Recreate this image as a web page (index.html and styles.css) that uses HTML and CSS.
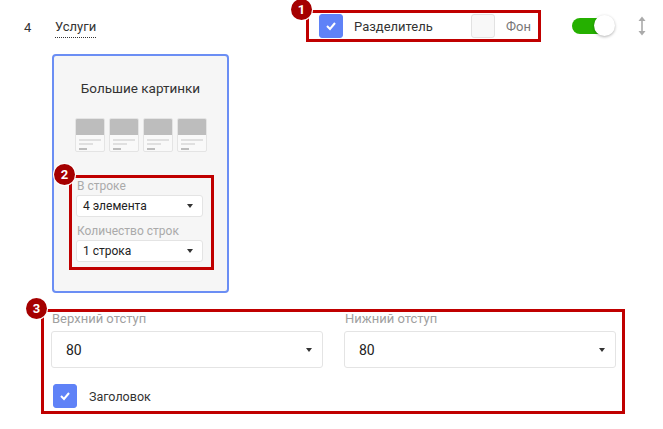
FILE: index.html
```html
<!DOCTYPE html>
<html lang="ru">
<head>
    <meta charset="UTF-8">
    <title>Блок</title>
    <link rel="stylesheet" href="styles.css">
</head>
<body>
    <div class="block">
        <div class="block-head">
            <span class="num">4</span>
            <div class="title-cell"><span class="title">Услуги</span></div>

            <div class="mark mark-head">
                <span class="badge">1</span>
                <label class="check-row">
                    <span class="checkbox checked">
                        <svg width="12" height="10" viewBox="0 0 12 10"><polyline points="2,5 5,8 10,2" fill="none" stroke="#fff" stroke-width="2"/></svg>
                    </span>
                    <span>Разделитель</span>
                </label>
                <label class="check-row">
                    <span class="checkbox"></span>
                    <span class="muted">Фон</span>
                </label>
            </div>

            <span class="toggle"><span class="knob"></span></span>
            <svg class="move" width="8" height="20" viewBox="0 0 8 20">
                <line x1="4" y1="3" x2="4" y2="17" stroke="#aaa" stroke-width="1.6"/>
                <polygon points="0.5,5 4,0.5 7.5,5" fill="#aaa"/>
                <polygon points="0.5,15 4,19.5 7.5,15" fill="#aaa"/>
            </svg>
        </div>

        <div class="card">
            <div class="card-title">Большие картинки</div>
            <div class="thumbs">
                <div class="thumb"><div class="thumb-img"></div><i class="l1"></i><i class="l2"></i><i class="l3"></i></div>
                <div class="thumb"><div class="thumb-img"></div><i class="l1"></i><i class="l2"></i><i class="l3"></i></div>
                <div class="thumb"><div class="thumb-img"></div><i class="l1"></i><i class="l2"></i><i class="l3"></i></div>
                <div class="thumb"><div class="thumb-img"></div><i class="l1"></i><i class="l2"></i><i class="l3"></i></div>
            </div>

            <div class="mark mark-card">
                <span class="badge">2</span>
                <div class="small-label">В строке</div>
                <div class="select small">4 элемента <span class="arrow"></span></div>
                <div class="small-label second">Количество строк</div>
                <div class="select small">1 строка <span class="arrow"></span></div>
            </div>
        </div>

        <div class="mark mark-bottom">
            <span class="badge">3</span>
            <div class="cols">
                <div class="col">
                    <div class="label">Верхний отступ</div>
                    <div class="select big">80 <span class="arrow"></span></div>
                </div>
                <div class="col">
                    <div class="label">Нижний отступ</div>
                    <div class="select big">80 <span class="arrow"></span></div>
                </div>
            </div>
            <label class="check-row heading-check">
                <span class="checkbox checked">
                    <svg width="12" height="10" viewBox="0 0 12 10"><polyline points="2,5 5,8 10,2" fill="none" stroke="#fff" stroke-width="2"/></svg>
                </span>
                <span>Заголовок</span>
            </label>
        </div>
    </div>
</body>
</html>
```

FILE: styles.css
```css
body {
    margin: 0;
    background: #fff;
    color: #333;
    font-family: Roboto, "Noto Sans", sans-serif;
    font-size: 13px;
}
.block {
    padding: 10px 0 0 0;
}
.block-head {
    display: flex;
    align-items: center;
    height: 32px;
    padding-left: 24px;
}
.num {
    width: 31px;
    margin-top: 2px;
}
.title-cell {
    width: 251px;
}
.title {
    border-bottom: 1px dotted #333;
    padding-bottom: 3px;
}
/* red annotation frames */
.mark {
    position: relative;
    border: 3px solid #c00000;
    box-sizing: border-box;
}
.badge {
    position: absolute;
    left: -18px;
    top: -14px;
    width: 21px;
    height: 21px;
    border-radius: 50%;
    background: #a50000;
    color: #fff;
    font-weight: bold;
    font-size: 13px;
    line-height: 21px;
    text-align: center;
    box-shadow: 0 0 0 1px #fff;
}
.mark-head {
    width: 235px;
    height: 32px;
    display: flex;
    align-items: center;
    justify-content: space-between;
    padding: 0 7px 0 10px;
}
.check-row {
    display: flex;
    align-items: center;
    gap: 11px;
}
.checkbox {
    width: 24px;
    height: 24px;
    border-radius: 3px;
    box-sizing: border-box;
    border: 1px solid #e2e2e2;
    background: #f8f8f8;
    display: flex;
    align-items: center;
    justify-content: center;
}
.checkbox.checked {
    background: #5f82f7;
    border-color: #5f82f7;
}
.muted {
    color: #777;
}
.toggle {
    position: relative;
    width: 38px;
    height: 16px;
    border-radius: 8px;
    background: #25b000;
    margin-left: 31px;
}
.knob {
    position: absolute;
    right: -5px;
    top: -3px;
    width: 21px;
    height: 21px;
    border-radius: 50%;
    background: #fff;
    box-shadow: 0 1px 3px rgba(0, 0, 0, 0.3);
}
.move {
    margin-left: 28px;
}
.card {
    width: 177px;
    height: 239px;
    box-sizing: border-box;
    margin: 12px 0 0 52px;
    border: 2px solid #6b8ef4;
    border-radius: 4px;
    background: #f6f6f6;
    padding-top: 24px;
}
.card-title {
    text-align: center;
    font-size: 13.5px;
    line-height: 16px;
    color: #333;
}
.thumbs {
    display: flex;
    justify-content: center;
    gap: 4px;
    margin-top: 22px;
}
.thumb {
    width: 30px;
    height: 34px;
    box-sizing: border-box;
    border: 1px solid #e4e4e4;
    border-radius: 2px;
    background: #f9f9f9;
    overflow: hidden;
}
.thumb-img {
    height: 16px;
    background: #bdbdbd;
}
.thumb i {
    display: block;
    height: 2px;
    margin-left: 3px;
    background: #e0e0e0;
}
.thumb .l1 { width: 22px; margin-top: 4px; }
.thumb .l2 { width: 14px; margin-top: 2px; }
.thumb .l3 { width: 8px; margin-top: 3px; background: #bdbdbd; }
.mark-card {
    width: 145px;
    margin: 23px 0 0 15px;
    padding: 1px 8px 5px 4px;
}
.small-label {
    color: #aaa;
    font-size: 12px;
    line-height: 14px;
    padding-left: 1px;
    margin-bottom: 2px;
}
.small-label.second {
    margin-top: 7px;
}
.select {
    display: flex;
    align-items: center;
    justify-content: space-between;
    box-sizing: border-box;
    background: #fff;
    border: 1px solid #e4e4e4;
    border-radius: 3px;
    color: #222;
}
.select.small {
    height: 22px;
    font-size: 12px;
    padding: 0 9px 0 6px;
}
.select.big {
    height: 37px;
    font-size: 14px;
    padding: 0 10px 0 14px;
}
.arrow {
    width: 0;
    height: 0;
    border-left: 3px solid transparent;
    border-right: 3px solid transparent;
    border-top: 4px solid #333;
}
.mark-bottom {
    width: 584px;
    margin: 16px 0 0 41px;
    padding: 0 6px 3px 7px;
}
.cols {
    display: flex;
    gap: 21px;
}
.col {
    flex: 1;
}
.label {
    color: #a0a0a0;
    font-size: 13px;
    line-height: 14px;
    padding-left: 1px;
    margin-bottom: 5px;
}
.heading-check {
    margin: 16px 0 0 2px;
    gap: 12px;
    font-size: 12.5px;
}
```
